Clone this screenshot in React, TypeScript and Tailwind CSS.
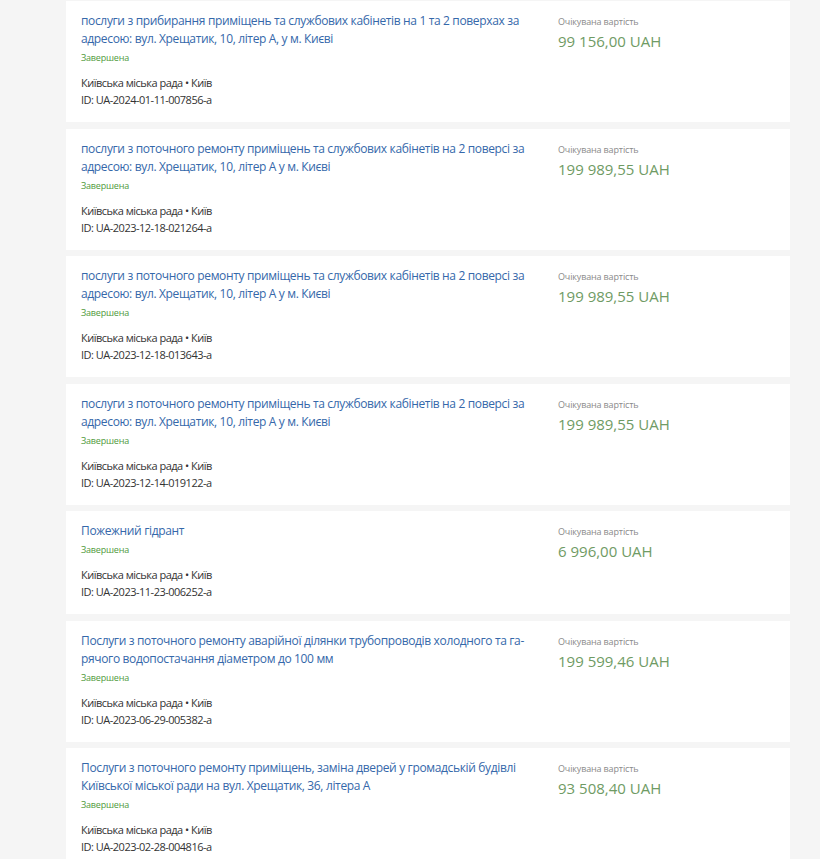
import React from "react";

type Item = { title: string; org: string; id: string; price: string };

const items: Item[] = [
  {
    title:
      "послуги з прибирання приміщень та службових кабінетів на 1 та 2 поверхах за адресою: вул. Хрещатик, 10, літер А, у м. Києві",
    org: "Київська міська рада • Київ",
    id: "ID: UA-2024-01-11-007856-a",
    price: "99 156,00 UAH",
  },
  {
    title:
      "послуги з поточного ремонту приміщень та службових кабінетів на 2 поверсі за адресою: вул. Хрещатик, 10, літер А у м. Києві",
    org: "Київська міська рада • Київ",
    id: "ID: UA-2023-12-18-021264-a",
    price: "199 989,55 UAH",
  },
  {
    title:
      "послуги з поточного ремонту приміщень та службових кабінетів на 2 поверсі за адресою: вул. Хрещатик, 10, літер А у м. Києві",
    org: "Київська міська рада • Київ",
    id: "ID: UA-2023-12-18-013643-a",
    price: "199 989,55 UAH",
  },
  {
    title:
      "послуги з поточного ремонту приміщень та службових кабінетів на 2 поверсі за адресою: вул. Хрещатик, 10, літер А у м. Києві",
    org: "Київська міська рада • Київ",
    id: "ID: UA-2023-12-14-019122-a",
    price: "199 989,55 UAH",
  },
  {
    title: "Пожежний гідрант",
    org: "Київська міська рада • Київ",
    id: "ID: UA-2023-11-23-006252-a",
    price: "6 996,00 UAH",
  },
  {
    title:
      "Послуги з поточного ремонту аварійної ділянки трубопроводів холодного та га-рячого водопостачання діаметром до 100 мм",
    org: "Київська міська рада • Київ",
    id: "ID: UA-2023-06-29-005382-a",
    price: "199 599,46 UAH",
  },
  {
    title:
      "Послуги з поточного ремонту приміщень, заміна дверей у громадській будівлі Київської міської ради на вул. Хрещатик, 36, літера А",
    org: "Київська міська рада • Київ",
    id: "ID: UA-2023-02-28-004816-a",
    price: "93 508,40 UAH",
  },
];

function Card({ item }: { item: Item }) {
  return (
    <div className="flex bg-white pl-[15px] pr-[15px] pt-[11px] pb-[14px]">
      <div className="w-[477px] shrink-0">
        <a className="block w-[452px] text-[12px] leading-[18px] tracking-[-0.35px] text-[#3568aa] cursor-pointer">
          {item.title}
        </a>
        <div className="mt-[3px] text-[9px] leading-[14px] tracking-[-0.2px] text-[#4f9a3c]">Завершена</div>
        <div className="mt-[9px] text-[11px] leading-[17px] tracking-[-0.5px] text-[#333333]">{item.org}</div>
        <div className="text-[11px] leading-[17px] tracking-[-0.5px] text-[#333333]">{item.id}</div>
      </div>
      <div className="pt-[3px]">
        <div className="text-[9px] leading-[14px] tracking-[-0.15px] text-[#8a8a8a]">Очікувана вартість</div>
        <div className="mt-[2px] text-[15px] leading-[20px] text-[#6f9b64]">{item.price}</div>
      </div>
    </div>
  );
}

export default function App() {
  return (
    <div
      className="min-h-[859px] w-[820px] bg-[#f5f5f5] pt-px"
      style={{ fontFamily: '"Open Sans", "Noto Sans", sans-serif' }}
    >
      <div className="ml-[66px] w-[724px] flex flex-col gap-[6.5px]">
        {items.map((it, i) => (
          <Card key={i} item={it} />
        ))}
      </div>
    </div>
  );
}
